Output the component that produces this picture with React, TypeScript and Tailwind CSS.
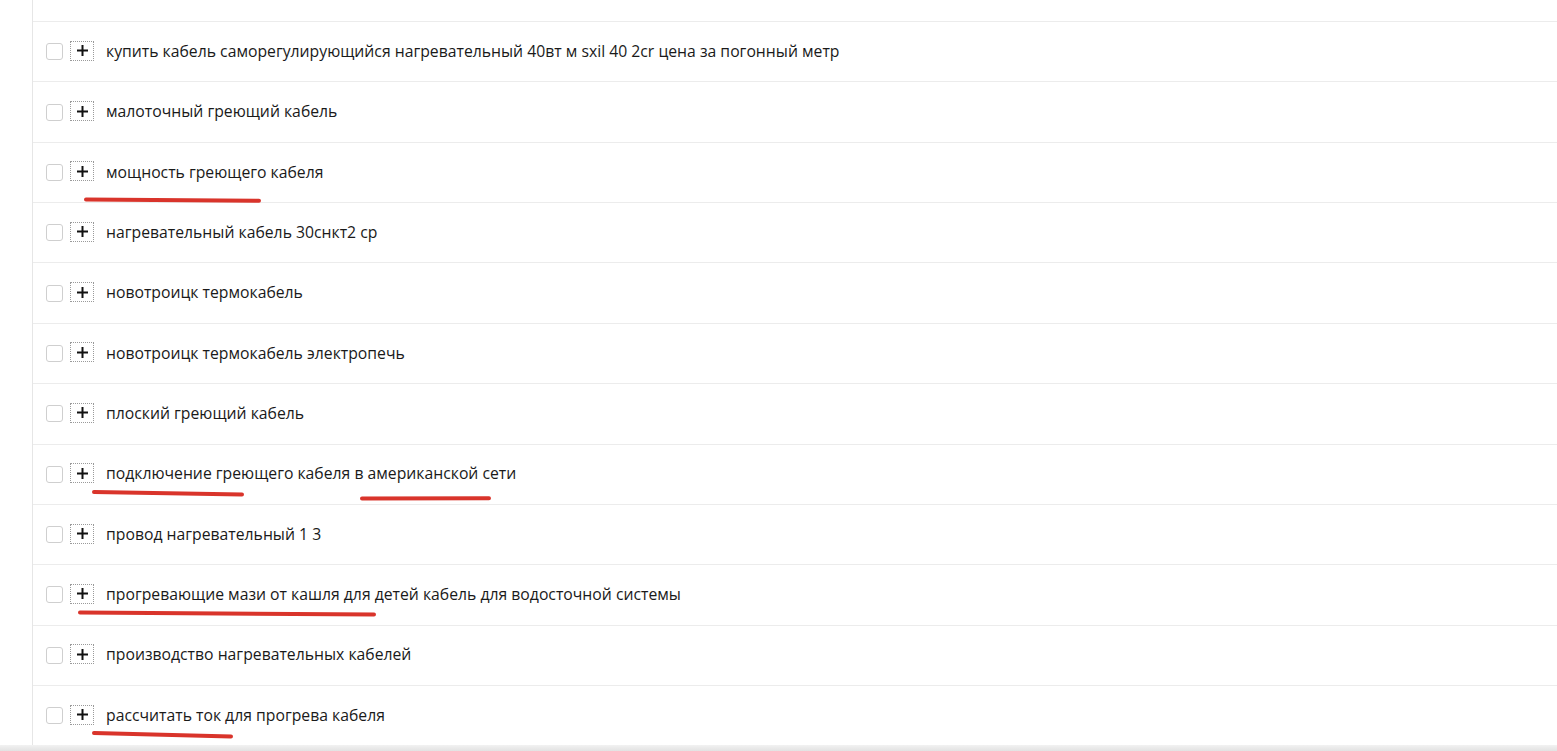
import React from "react";

const rows = [
  "купить кабель саморегулирующийся нагревательный 40вт м sxil 40 2cr цена за погонный метр",
  "малоточный греющий кабель",
  "мощность греющего кабеля",
  "нагревательный кабель 30снкт2 ср",
  "новотроицк термокабель",
  "новотроицк термокабель электропечь",
  "плоский греющий кабель",
  "подключение греющего кабеля в американской сети",
  "провод нагревательный 1 3",
  "прогревающие мази от кашля для детей кабель для водосточной системы",
  "производство нагревательных кабелей",
  "рассчитать ток для прогрева кабеля",
];

// red marker strokes drawn over the list (page coords)
const marks = [
  [86, 199.5, 259, 200.8],
  [94, 492, 242, 494.5],
  [362, 498.6, 489, 498.2],
  [80, 612.5, 374, 614.5],
  [94, 733, 231, 736.5],
];

function Row({ text }: { text: string }) {
  return (
    <div className="h-[60.36px] border-t border-[#ececec] flex items-center pl-[13px]">
      <span className="w-[17px] h-[17px] rounded-[3px] border border-[#cfcfcf] bg-white shrink-0" />
      <span className="ml-[7px] w-[24px] h-[20px] border border-dotted border-[#9a9a9a] flex items-center justify-center shrink-0 -mt-[2px]">
        <svg width="13" height="13" viewBox="0 0 13 13">
          <path d="M6.5 1v11M1 6.5h11" stroke="#111" strokeWidth="2" />
        </svg>
      </span>
      <span className="ml-[12px] text-[15.75px] text-[#1a1a1a] whitespace-nowrap">{text}</span>
    </div>
  );
}

export default function App() {
  return (
    <div
      className="relative w-[1557px] h-[751px] overflow-hidden bg-white"
      style={{ fontFamily: '"Open Sans", "Noto Sans", sans-serif' }}
    >
      <div className="ml-[32px] h-[745px] border-l border-[#e6e6e6]">
        <div className="h-[21px]" />
        {rows.map((r) => (
          <Row key={r} text={r} />
        ))}
      </div>
      <div className="h-[6px] bg-gradient-to-b from-[#f2f2f2] to-[#e2e2e2]" />
      <svg className="absolute inset-0 pointer-events-none" width="1557" height="751">
        {marks.map(([x1, y1, x2, y2], i) => (
          <line
            key={i}
            x1={x1}
            y1={y1}
            x2={x2}
            y2={y2}
            stroke="#d9342b"
            strokeWidth="4"
            strokeLinecap="round"
          />
        ))}
      </svg>
    </div>
  );
}
